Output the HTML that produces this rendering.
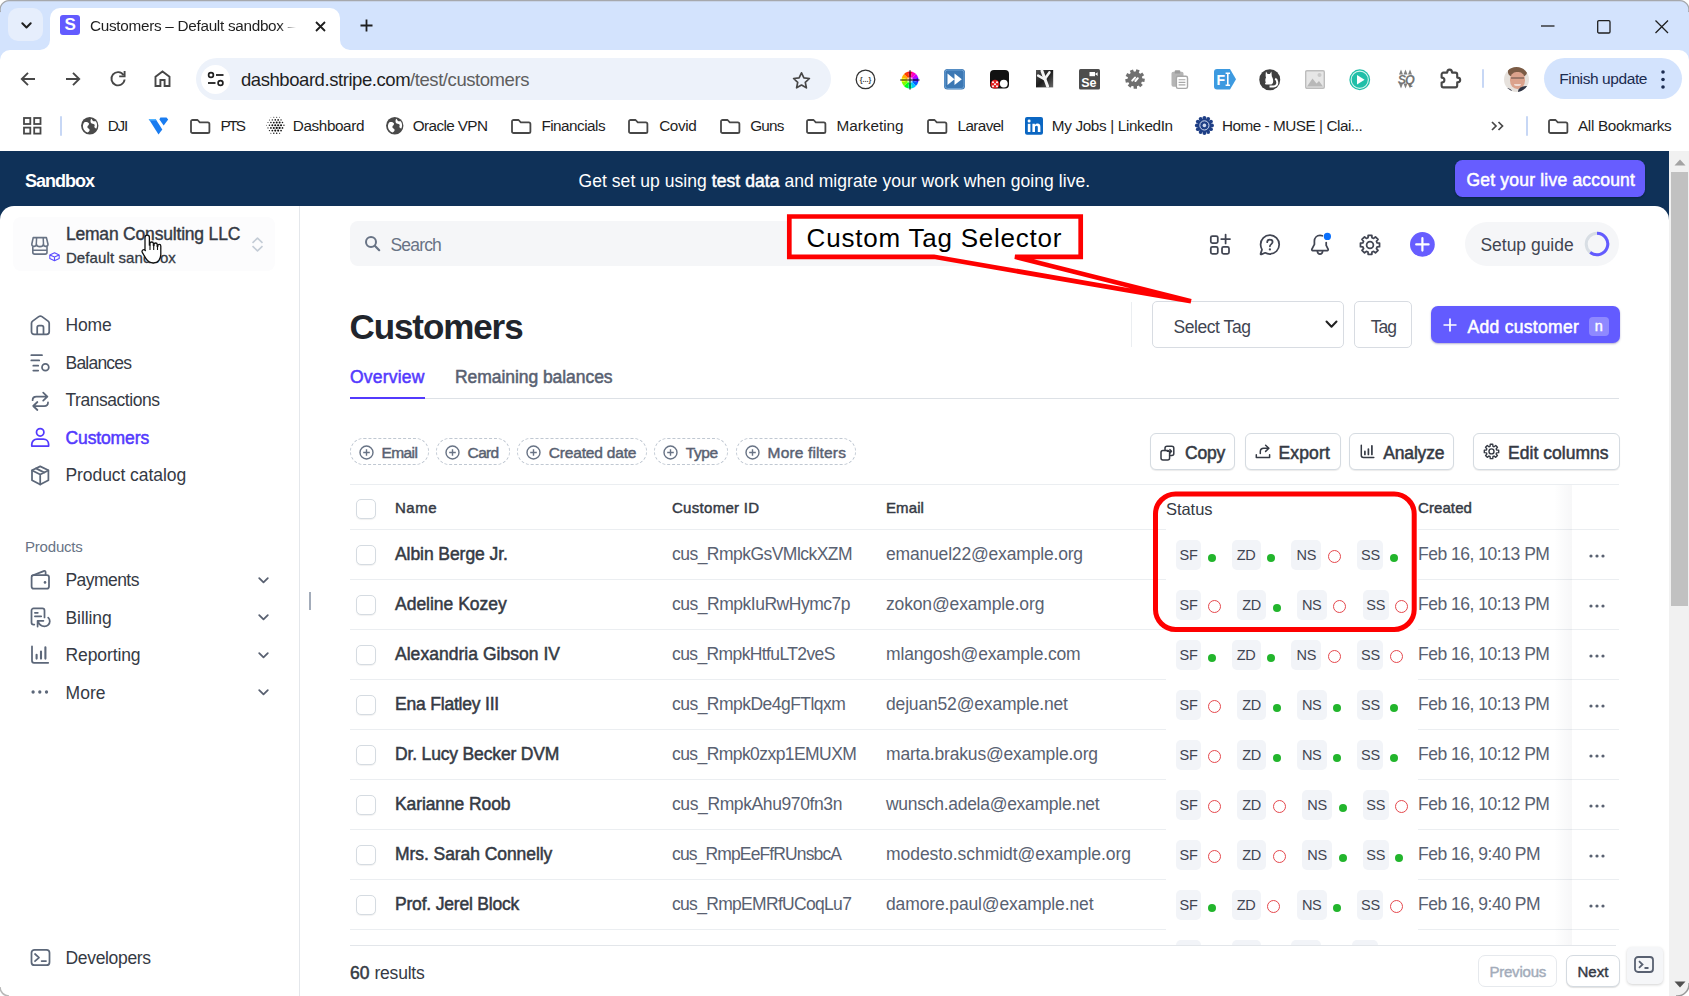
<!DOCTYPE html>
<html><head><meta charset="utf-8">
<style>
*{box-sizing:border-box;margin:0;padding:0}
html,body{width:1689px;height:996px;overflow:hidden;background:#fff}
body{font-family:"Liberation Sans",sans-serif;color:#1f1f1f;position:relative}
.a{position:absolute;white-space:nowrap}
svg{position:absolute;overflow:visible}
/* chrome */
#tabstrip{left:0;top:0;width:1689px;height:104px;background:#d3e3fd}
#toolbar{left:0;top:50px;width:1689px;height:101px;background:#fff;border-radius:10px 10px 0 0}
#tab{left:50px;top:8px;width:290px;height:43px;background:#fff;border-radius:10px 10px 0 0}
#url{left:196px;top:58px;width:635px;height:42px;border-radius:21px;background:#edf2fa}
.ct{font-size:15px;color:#1f1f1f;letter-spacing:-0.35px}
.bm{font-size:15px;color:#1f1f1f;letter-spacing:-0.45px;top:117px}
/* page */
#banner{left:0;top:151px;width:1669px;height:70px;background:#0f3158}
#side{left:0;top:206px;width:300px;height:790px;background:#fff;border-radius:14px 0 0 10px;border-right:1px solid #e4e7eb}
#main{left:300px;top:206px;width:1369px;height:790px;background:#fff;border-radius:0 14px 10px 0}
#sbar{left:1669px;top:151px;width:20px;height:845px;background:#f1f1f1}
.nav{font-size:17.5px;color:#353a44;letter-spacing:-0.3px;left:65px}
.name{font-size:17.5px;-webkit-text-stroke:0.5px #353a44;color:#353a44;left:395px;letter-spacing:-0.55px}
.cid{font-size:17.5px;color:#596171;left:672px;letter-spacing:-0.45px}
.em{font-size:17.5px;color:#596171;left:886px;letter-spacing:-0.3px}
.dt{font-size:17.5px;color:#596171;left:1418px;letter-spacing:-0.35px}
.hd{font-size:15px;-webkit-text-stroke:0.45px #353a44;color:#353a44;top:499.4px;letter-spacing:-0.4px}
.rl{left:350px;width:816px;height:1px;background:#ebeef1}
.rl2{left:1418px;width:201px;height:1px;background:#ebeef1}
.cb{left:356px;width:20px;height:20px;border:1px solid #d5dbe1;border-radius:5px;background:#fff;box-shadow:0 1px 1px rgba(0,0,0,.06)}
.tg{height:29.5px;border-radius:5px;background:#f2f4f8;font-size:14.5px;color:#414552;text-align:center;line-height:31.2px;letter-spacing:-0.3px}
.dg{width:8px;height:8px;border-radius:50%;background:#22b52c}
.dr{width:13px;height:13px;border-radius:50%;border:1.5px solid #e5484d;background:#fff}
.dots{left:1588px;font-size:16px;color:#596171;font-weight:bold;letter-spacing:1px}
.btn{height:37px;border:1px solid #d5dbe1;border-radius:6px;background:#fff;box-shadow:0 1px 1px rgba(0,0,0,.08);font-size:17px;font-weight:bold;color:#353a44;letter-spacing:-0.5px;line-height:36px}
.chip{top:438px;height:27px;border:1px dashed #c0c8d2;border-radius:14px;font-size:15px;font-weight:bold;color:#596171;letter-spacing:-0.45px;line-height:27px}
</style></head><body>
<!-- CHROME -->
<div class="a" id="tabstrip"></div>
<div class="a" id="toolbar"></div>
<div class="a" id="tab"></div>
<div class="a" id="url"></div>
<!-- PAGE -->
<div class="a" id="banner"></div>
<div class="a" id="side"></div>
<div class="a" id="main"></div>
<div class="a" id="sbar"></div>
<!--CHROMEITEMS-->
<div class="a" style="left:8.3px;top:8.3px;width:34.7px;height:33.2px;border-radius:10px;background:#e6eefc"></div>
<svg style="left:20.5px;top:21.5px" width="11" height="7" viewBox="0 0 11 7"><path d="M1.3 1.3L5.5 5.5L9.7 1.3" fill="none" stroke="#1f1f1f" stroke-width="2" stroke-linecap="round" stroke-linejoin="round"/></svg>
<svg style="left:40px;top:40px" width="10" height="10" viewBox="0 0 10 10"><path d="M10 0V10H0A10 10 0 0 0 10 0Z" fill="#fff"/></svg>
<svg style="left:340px;top:40px" width="10" height="10" viewBox="0 0 10 10"><path d="M0 0V10H10A10 10 0 0 1 0 0Z" fill="#fff"/></svg>
<div class="a" style="left:60px;top:15px;width:20px;height:20px;border-radius:3px;background:#635bff"></div>
<div class="a" style="left:64.6px;top:15.2px;font-size:17px;font-weight:bold;color:#fff;letter-spacing:0px;">S</div>
<div class="a" id="c_tab" style="left:90px;top:16.9px;font-size:15.3px;font-weight:normal;color:#1f1f1f;letter-spacing:-0.29px;-webkit-mask-image:linear-gradient(90deg,#000 92%,transparent 100%);">Customers – Default sandbox –</div>
<svg style="left:314.5px;top:20.5px" width="11" height="11" viewBox="0 0 11 11"><path d="M1 1L10 10M10 1L1 10" stroke="#1f1f1f" stroke-width="1.8"/></svg>
<svg style="left:359.5px;top:19px" width="13" height="13" viewBox="0 0 13 13"><path d="M6.5 0.5V12.5M0.5 6.5H12.5" stroke="#1f1f1f" stroke-width="1.8"/></svg>
<svg style="left:1541px;top:25px" width="14" height="2" viewBox="0 0 14 2"><path d="M0 1H13.5" stroke="#1f1f1f" stroke-width="1.3"/></svg>
<svg style="left:1596.5px;top:19.5px" width="14" height="14" viewBox="0 0 14 14"><rect x="0.7" y="0.7" width="12.3" height="12.3" rx="1.2" fill="none" stroke="#1f1f1f" stroke-width="1.3"/></svg>
<svg style="left:1654.5px;top:19.5px" width="14" height="14" viewBox="0 0 14 14"><path d="M0.5 0.5L13 13M13 0.5L0.5 13" stroke="#1f1f1f" stroke-width="1.3"/></svg>
<svg style="left:20px;top:70.5px" width="16" height="16" viewBox="0 0 16 16"><path d="M15 8H2M8 1.8L1.8 8L8 14.2" fill="none" stroke="#474747" stroke-width="1.9"/></svg>
<svg style="left:64.5px;top:70.5px" width="16" height="16" viewBox="0 0 16 16"><path d="M1 8H14M8 1.8L14.2 8L8 14.2" fill="none" stroke="#474747" stroke-width="1.9"/></svg>
<svg style="left:109.5px;top:70px" width="16" height="17" viewBox="0 0 16 17"><path d="M13.6 5.2A6.6 6.6 0 1 0 14.6 9.5" fill="none" stroke="#474747" stroke-width="1.9"/><path d="M14.6 1V6.4H9.2" fill="none" stroke="#474747" stroke-width="1.9"/></svg>
<svg style="left:154px;top:70px" width="17" height="17.5" viewBox="0 0 17 17.5"><path d="M1.5 16V6.8L8.5 1.5L15.5 6.8V16H10.6V10H6.4V16Z" fill="none" stroke="#474747" stroke-width="1.9"/></svg>
<div class="a" style="left:201px;top:64.5px;width:29px;height:29px;border-radius:50%;background:#fff"></div>
<svg style="left:207px;top:71px" width="18" height="16" viewBox="0 0 18 16"><circle cx="4" cy="4" r="2.4" fill="none" stroke="#1f1f1f" stroke-width="1.7"/><path d="M9 4H16.5" stroke="#1f1f1f" stroke-width="1.8"/><circle cx="13.5" cy="12" r="2.4" fill="none" stroke="#1f1f1f" stroke-width="1.7"/><path d="M1 12H8.5" stroke="#1f1f1f" stroke-width="1.8"/></svg>
<div class="a" id="c_url" style="left:241px;top:69.3px;font-size:18.5px;letter-spacing:-0.44px;color:#1f1f1f">dashboard.stripe.com<span style="color:#5e5e5e">/test/customers</span></div>
<svg style="left:792px;top:70.5px" width="19" height="18" viewBox="0 0 19 18"><path d="M9.5 1.8L11.9 6.9L17.4 7.5L13.3 11.3L14.4 16.8L9.5 14L4.6 16.8L5.7 11.3L1.6 7.5L7.1 6.9Z" fill="none" stroke="#474747" stroke-width="1.7" stroke-linejoin="round"/></svg>
<svg style="left:854.5px;top:69px" width="21" height="21" viewBox="0 0 21 21"><circle cx="10.5" cy="10.4" r="9.3" fill="#fff" stroke="#333" stroke-width="1.3"/><text x="10.5" y="13" font-size="7.2" font-family="Liberation Sans" font-weight="bold" text-anchor="middle" fill="#444">{...}</text></svg>
<svg style="left:899.5px;top:69.5px" width="20" height="20" viewBox="0 0 20 20"><path d="M10 10L7.80 1.79A8.5 8.5 0 0 1 12.34 1.83Z" fill="#ff0040"/><path d="M10 10L12.20 1.79A8.5 8.5 0 0 1 16.11 4.10Z" fill="#ff00c0"/><path d="M10 10L16.01 3.99A8.5 8.5 0 0 1 18.25 7.94Z" fill="#c000ff"/><path d="M10 10L18.21 7.80A8.5 8.5 0 0 1 18.17 12.34Z" fill="#4000ff"/><path d="M10 10L18.21 12.20A8.5 8.5 0 0 1 15.90 16.11Z" fill="#0060ff"/><path d="M10 10L16.01 16.01A8.5 8.5 0 0 1 12.06 18.25Z" fill="#00c8ff"/><path d="M10 10L12.20 18.21A8.5 8.5 0 0 1 7.66 18.17Z" fill="#00ffa0"/><path d="M10 10L7.80 18.21A8.5 8.5 0 0 1 3.89 15.90Z" fill="#00ff20"/><path d="M10 10L3.99 16.01A8.5 8.5 0 0 1 1.75 12.06Z" fill="#80ff00"/><path d="M10 10L1.79 12.20A8.5 8.5 0 0 1 1.83 7.66Z" fill="#f0ff00"/><path d="M10 10L1.79 7.80A8.5 8.5 0 0 1 4.10 3.89Z" fill="#ffb000"/><path d="M10 10L3.99 3.99A8.5 8.5 0 0 1 7.94 1.75Z" fill="#ff4000"/><circle cx="10" cy="10" r="3" fill="#fff" opacity=".55"/><path d="M10 0.2V19.6M0.2 10H19.6" stroke="#111" stroke-width="1"/></svg>
<svg style="left:944px;top:69px" width="21" height="20.5" viewBox="0 0 21 20.5"><rect width="21" height="20.5" rx="3.5" fill="#3c78b4"/><rect x="1" y="1" width="19" height="18.5" rx="2.8" fill="none" stroke="#6ea2d4" stroke-width="1"/><path d="M3.5 4.5L10.5 10.2L3.5 16ZM10.5 4.5L17.8 10.2L10.5 16Z" fill="#fff"/></svg>
<svg style="left:990px;top:70px" width="19" height="18.5" viewBox="0 0 19 18.5"><rect width="19" height="18.5" rx="4" fill="#111"/><circle cx="5" cy="14.2" r="4.4" fill="#e02020"/><circle cx="3" cy="12.2" r="1" fill="#fff"/><circle cx="7" cy="12.2" r="1" fill="#fff"/><circle cx="5" cy="14.2" r="1" fill="#fff"/><circle cx="3" cy="16.2" r="1" fill="#fff"/><circle cx="7" cy="16.2" r="1" fill="#fff"/><circle cx="13.8" cy="13.6" r="3.9" fill="#fff"/></svg>
<svg style="left:1036px;top:70.3px" width="17.2" height="17.4" viewBox="0 0 17.2 17.4"><defs><linearGradient id="xg" x1="0" y1="0" x2="1" y2="1"><stop offset="0" stop-color="#555"/><stop offset=".5" stop-color="#1c1c1c"/><stop offset="1" stop-color="#6a6a6a"/></linearGradient></defs><rect width="17.2" height="17.4" fill="url(#xg)"/><path d="M6 1L11.6 16.2" stroke="#f4f4f4" stroke-width="3" stroke-linecap="round"/><path d="M13.4 2.4L8.6 9.2M2.2 5.6L8 8.8" stroke="#f4f4f4" stroke-width="2.6" stroke-linecap="round"/></svg>
<svg style="left:1079px;top:69px" width="21" height="20.5" viewBox="0 0 21 20.5"><rect width="21" height="20.5" rx="1.5" fill="#4d4d4d"/><text x="2.2" y="18" font-size="12.5" font-family="Liberation Sans" font-weight="bold" fill="#fff">Se</text><rect x="10.5" y="3" width="5.5" height="4.2" fill="#fff"/><path d="M16 5.1L18.6 3.2V7Z" fill="#fff"/></svg>
<svg style="left:1124.6px;top:69.2px" width="20" height="20" viewBox="0 0 20 20"><path d="M15.94 10.84L19.61 11.35" stroke="#707070" stroke-width="3.4" stroke-linecap="butt"/><path d="M14.01 14.46L16.49 17.21" stroke="#707070" stroke-width="3.4" stroke-linecap="butt"/><path d="M10.21 16.00L10.34 19.69" stroke="#707070" stroke-width="3.4" stroke-linecap="butt"/><path d="M6.31 14.73L4.03 17.64" stroke="#707070" stroke-width="3.4" stroke-linecap="butt"/><path d="M4.13 11.25L0.51 12.02" stroke="#707070" stroke-width="3.4" stroke-linecap="butt"/><path d="M4.70 7.18L1.44 5.45" stroke="#707070" stroke-width="3.4" stroke-linecap="butt"/><path d="M7.75 4.44L6.37 1.01" stroke="#707070" stroke-width="3.4" stroke-linecap="butt"/><path d="M11.85 4.29L13.00 0.77" stroke="#707070" stroke-width="3.4" stroke-linecap="butt"/><path d="M15.09 6.82L18.23 4.86" stroke="#707070" stroke-width="3.4" stroke-linecap="butt"/><circle cx="10" cy="10" r="7.4" fill="#707070"/><path d="M7.2 11.6L10 8.6M10.4 12L12.8 9.2" stroke="#fff" stroke-width="2" stroke-linecap="round"/></svg>
<svg style="left:1171px;top:69.8px" width="17.2" height="19" viewBox="0 0 18.5 20.5"><rect x="0.5" y="2" width="13" height="16" rx="2" fill="#b5b5b5"/><rect x="4" y="0.3" width="6" height="3.6" rx="1" fill="#9c9c9c"/><rect x="5.8" y="6.8" width="12" height="13" rx="1.8" fill="#fff" stroke="#a8a8a8" stroke-width="1.5"/><path d="M8.2 10.5H15.5M8.2 13.3H15.5M8.2 16.1H15.5" stroke="#a8a8a8" stroke-width="1.3"/></svg>
<svg style="left:1214px;top:69px" width="22" height="20.5" viewBox="0 0 22 20.5"><path d="M3 0H16L22 10.25L16 20.5H3A3 3 0 0 1 0 17.5V3A3 3 0 0 1 3 0Z" fill="#3d9ae0"/><text x="2.5" y="15.6" font-size="14" font-family="Liberation Sans" font-weight="bold" fill="#fff">F</text><path d="M13.8 4.2V16.3M11.6 4.2H16M11.6 16.3H16" stroke="#fff" stroke-width="1.6"/></svg>
<svg style="left:1259px;top:68.8px" width="21.5" height="21.5" viewBox="0 0 21.5 21.5"><circle cx="10.75" cy="10.75" r="10.5" fill="#404040"/><path d="M7 2.6L8.6 5L10.8 5L12.4 2.6L12.8 7.2C13.6 9 14.2 10 14.2 12.2C14.2 14.4 13 15.6 11 15.6H7.2C6 15.6 5.6 14 6.8 13.4C6 12 6.2 10 7 8.6C6.4 7.4 6.6 4.6 7 2.6Z" fill="#fff"/><path d="M10.5 17.6H14.4C17.2 17.6 18.6 15.4 18.2 12.8C18 11.4 17.2 10.2 16.2 9.6" fill="none" stroke="#fff" stroke-width="2"/></svg>
<svg style="left:1304.5px;top:70px" width="20" height="19" viewBox="0 0 20 19"><rect x="0.7" y="0.7" width="18.6" height="17.6" rx="1.2" fill="#e6e6e6" stroke="#bdbdbd" stroke-width="1.4"/><path d="M2 16.5L7.5 8.5L11.5 13.5L14 11L18 16.5Z" fill="#b8b8b8"/><circle cx="14.5" cy="5" r="2" fill="#c9c9c9"/></svg>
<svg style="left:1349px;top:69px" width="21.5" height="21.5" viewBox="0 0 21.5 21.5"><circle cx="10.75" cy="10.75" r="10.4" fill="#1fbfa8"/><circle cx="10.75" cy="10.75" r="8.6" fill="none" stroke="#d6f5ef" stroke-width="1.1"/><path d="M8 6L15.6 10.75L8 15.5Z" fill="#fff"/></svg>
<svg style="left:1395.5px;top:69px" width="19" height="20" viewBox="0 0 19 20"><path d="M3 5.4L5 0.6L7 5.4Z" fill="#808080"/><path d="M7.5 5.4L9.5 0.6L11.5 5.4Z" fill="#808080"/><path d="M12 5.4L14 0.6L16 5.4Z" fill="#808080"/><path d="M3 14.6L5 19.4L7 14.6Z" fill="#808080"/><path d="M7.5 14.6L9.5 19.4L11.5 14.6Z" fill="#808080"/><path d="M12 14.6L14 19.4L16 14.6Z" fill="#808080"/><text x="9.8" y="14.6" font-size="12.5" font-style="italic" font-family="Liberation Sans" font-weight="bold" text-anchor="middle" fill="#757575" letter-spacing="-0.9">SQ</text></svg>
<svg style="left:1440px;top:67.8px" width="22" height="21.5" viewBox="0 0 22 21.5"><path d="M3.4 4.6H7.2C7.2 2.6 8.2 1.6 9.6 1.6C11 1.6 12 2.6 12 4.6H15.4C16.4 4.6 17.2 5.4 17.2 6.4V9.6C19.2 9.6 20.2 10.6 20.2 12C20.2 13.4 19.2 14.4 17.2 14.4V17.6C17.2 18.6 16.4 19.4 15.4 19.4H3.4C2.4 19.4 1.6 18.6 1.6 17.6V14.6C3.4 14.6 4.4 13.5 4.4 12.1C4.4 10.7 3.4 9.6 1.6 9.6V6.4C1.6 5.4 2.4 4.6 3.4 4.6Z" fill="none" stroke="#474747" stroke-width="2.1" stroke-linejoin="round"/></svg>
<div class="a" style="left:1481.5px;top:69.3px;width:2px;height:19px;background:#c7d7f5;border-radius:1px"></div>
<div class="a" style="left:1504px;top:66.5px;width:25px;height:25px;border-radius:50%;overflow:hidden;background:#e6e1dc"><div class="a" style="left:4px;top:-3px;width:19px;height:13px;border-radius:50% 50% 35% 35%;background:#7b5b45"></div><div class="a" style="left:6px;top:5.5px;width:14.5px;height:17px;border-radius:45% 45% 50% 50%;background:#dba28c"></div><div class="a" style="left:7px;top:10.5px;width:12.5px;height:1.6px;background:#5e4a42;opacity:.5"></div><div class="a" style="left:9.5px;top:17px;width:7.5px;height:2px;border-radius:0 0 4px 4px;background:#f5e9e4;opacity:.8"></div><div class="a" style="left:14px;top:19px;width:14px;height:9px;border-radius:60% 0 0 0;background:#2f3444"></div><div class="a" style="left:-2px;top:21px;width:10px;height:6px;border-radius:0 60% 0 0;background:#3a3f4e"></div></div>
<div class="a" style="left:1544px;top:58px;width:137.6px;height:41.2px;border-radius:21px;background:#d3e3fd"></div>
<div class="a" id="c_fin" style="left:1559.3px;top:69.8px;font-size:15.5px;font-weight:normal;color:#1b2b50;letter-spacing:-0.41px;">Finish update</div>
<svg style="left:1660.6px;top:69.5px" width="4" height="19" viewBox="0 0 4 19"><circle cx="2" cy="2" r="1.8" fill="#1b2b50"/><circle cx="2" cy="9.5" r="1.8" fill="#1b2b50"/><circle cx="2" cy="17" r="1.8" fill="#1b2b50"/></svg>
<svg style="left:23px;top:117px" width="19" height="18" viewBox="0 0 19 18"><rect x="1" y="1" width="6.3" height="6" fill="none" stroke="#474747" stroke-width="1.8"/><rect x="11.2" y="1" width="6.3" height="6" fill="none" stroke="#474747" stroke-width="1.8"/><rect x="1" y="10.6" width="6.3" height="6" fill="none" stroke="#474747" stroke-width="1.8"/><rect x="11.2" y="10.6" width="6.3" height="6" fill="none" stroke="#474747" stroke-width="1.8"/></svg>
<div class="a" style="left:59.8px;top:115.5px;width:2px;height:20px;background:#c7d7f5;border-radius:1px"></div>
<svg style="left:81px;top:116.7px" width="17.5" height="17.5" viewBox="0 0 17.5 17.5"><circle cx="8.75" cy="8.75" r="8.7" fill="#4a4a4a"/><path d="M3.4 5.2C5.2 4.6 7.6 5 8 6.6C8.4 8.4 6.2 8.6 6.4 10.2C6.6 11.6 8.4 11.2 8.6 12.8C8.7 14 7.6 15.2 6.6 15.6C3.6 14.4 1.6 11.4 2 8.2C2.2 7 2.7 6 3.4 5.2ZM10.2 1.8C11.4 2.4 11.2 3.8 12.4 4.2C13.6 4.6 14.4 3.8 15 4.6C16.4 6.6 16.4 9.4 15.4 11.4C14.6 11.6 13.6 11 13.4 10C13.2 8.8 14.2 8.2 13.4 7.4C12.4 6.4 10.8 7.2 10 6C9.2 4.8 9.4 2.8 10.2 1.8Z" fill="#fff"/></svg>
<div class="a" style="left:107.8px;top:117px;font-size:15.3px;font-weight:normal;color:#1f1f1f;letter-spacing:-1.25px;">DJI</div>
<svg style="left:148px;top:117px" width="21" height="18" viewBox="0 0 21 18"><path d="M0.7 2H7.6L14.3 12.4L10.5 17.6Z" fill="#1a7cf0"/><path d="M0.7 2H7.6L8.5 3.5H1.7Z" fill="#55b4ff"/><path d="M12.4 0.6H18.5L20.2 2.5L15.7 8.6L11.4 2.5Z" fill="#1a7cf0"/></svg>
<svg style="left:190px;top:118.8px" width="20.5" height="15" viewBox="0 0 20.5 15"><path d="M1 2.6A1.6 1.6 0 0 1 2.6 1H7.6L9.8 3.3H17.8A1.6 1.6 0 0 1 19.4 4.9V12.4A1.6 1.6 0 0 1 17.8 14H2.6A1.6 1.6 0 0 1 1 12.4Z" fill="none" stroke="#474747" stroke-width="1.8" stroke-linejoin="round"/></svg>
<div class="a" style="left:220.5px;top:117px;font-size:15.3px;font-weight:normal;color:#1f1f1f;letter-spacing:-2.18px;">PTS</div>
<svg style="left:265.2px;top:115.4px" width="20.5" height="20.5" viewBox="0 0 20.5 20.5"><circle cx="5.90" cy="2.25" r="0.34" fill="#111"/><circle cx="8.80" cy="2.25" r="0.50" fill="#111"/><circle cx="11.70" cy="2.25" r="0.55" fill="#111"/><circle cx="14.60" cy="2.25" r="0.45" fill="#111"/><circle cx="4.45" cy="4.91" r="0.50" fill="#111"/><circle cx="7.35" cy="4.91" r="0.71" fill="#111"/><circle cx="10.25" cy="4.91" r="0.82" fill="#111"/><circle cx="13.15" cy="4.91" r="0.84" fill="#111"/><circle cx="16.05" cy="4.91" r="0.70" fill="#111"/><circle cx="3.00" cy="7.58" r="0.53" fill="#111"/><circle cx="5.90" cy="7.58" r="0.78" fill="#111"/><circle cx="8.80" cy="7.58" r="0.93" fill="#111"/><circle cx="11.70" cy="7.58" r="1.00" fill="#111"/><circle cx="14.60" cy="7.58" r="1.00" fill="#111"/><circle cx="17.50" cy="7.58" r="0.79" fill="#111"/><circle cx="1.55" cy="10.25" r="0.42" fill="#111"/><circle cx="4.45" cy="10.25" r="0.76" fill="#111"/><circle cx="7.35" cy="10.25" r="0.95" fill="#111"/><circle cx="10.25" cy="10.25" r="1.04" fill="#111"/><circle cx="13.15" cy="10.25" r="1.10" fill="#111"/><circle cx="16.05" cy="10.25" r="1.03" fill="#111"/><circle cx="18.95" cy="10.25" r="0.67" fill="#111"/><circle cx="3.00" cy="12.92" r="0.61" fill="#111"/><circle cx="5.90" cy="12.92" r="0.89" fill="#111"/><circle cx="8.80" cy="12.92" r="1.04" fill="#111"/><circle cx="11.70" cy="12.92" r="1.12" fill="#111"/><circle cx="14.60" cy="12.92" r="1.11" fill="#111"/><circle cx="17.50" cy="12.92" r="0.87" fill="#111"/><circle cx="4.45" cy="15.59" r="0.65" fill="#111"/><circle cx="7.35" cy="15.59" r="0.91" fill="#111"/><circle cx="10.25" cy="15.59" r="1.04" fill="#111"/><circle cx="13.15" cy="15.59" r="1.04" fill="#111"/><circle cx="16.05" cy="15.59" r="0.86" fill="#111"/><circle cx="5.90" cy="18.25" r="0.50" fill="#111"/><circle cx="8.80" cy="18.25" r="0.73" fill="#111"/><circle cx="11.70" cy="18.25" r="0.77" fill="#111"/><circle cx="14.60" cy="18.25" r="0.61" fill="#111"/></svg>
<div class="a" style="left:292.8px;top:117px;font-size:15.3px;font-weight:normal;color:#1f1f1f;letter-spacing:-0.4px;">Dashboard</div>
<svg style="left:385.8px;top:116.7px" width="17.5" height="17.5" viewBox="0 0 17.5 17.5"><circle cx="8.75" cy="8.75" r="8.7" fill="#4a4a4a"/><path d="M3.4 5.2C5.2 4.6 7.6 5 8 6.6C8.4 8.4 6.2 8.6 6.4 10.2C6.6 11.6 8.4 11.2 8.6 12.8C8.7 14 7.6 15.2 6.6 15.6C3.6 14.4 1.6 11.4 2 8.2C2.2 7 2.7 6 3.4 5.2ZM10.2 1.8C11.4 2.4 11.2 3.8 12.4 4.2C13.6 4.6 14.4 3.8 15 4.6C16.4 6.6 16.4 9.4 15.4 11.4C14.6 11.6 13.6 11 13.4 10C13.2 8.8 14.2 8.2 13.4 7.4C12.4 6.4 10.8 7.2 10 6C9.2 4.8 9.4 2.8 10.2 1.8Z" fill="#fff"/></svg>
<div class="a" style="left:412.8px;top:117px;font-size:15.3px;font-weight:normal;color:#1f1f1f;letter-spacing:-0.62px;">Oracle VPN</div>
<svg style="left:511.3px;top:118.8px" width="20.5" height="15" viewBox="0 0 20.5 15"><path d="M1 2.6A1.6 1.6 0 0 1 2.6 1H7.6L9.8 3.3H17.8A1.6 1.6 0 0 1 19.4 4.9V12.4A1.6 1.6 0 0 1 17.8 14H2.6A1.6 1.6 0 0 1 1 12.4Z" fill="none" stroke="#474747" stroke-width="1.8" stroke-linejoin="round"/></svg>
<div class="a" style="left:541.4px;top:117px;font-size:15.3px;font-weight:normal;color:#1f1f1f;letter-spacing:-0.52px;">Financials</div>
<svg style="left:628.2px;top:118.8px" width="20.5" height="15" viewBox="0 0 20.5 15"><path d="M1 2.6A1.6 1.6 0 0 1 2.6 1H7.6L9.8 3.3H17.8A1.6 1.6 0 0 1 19.4 4.9V12.4A1.6 1.6 0 0 1 17.8 14H2.6A1.6 1.6 0 0 1 1 12.4Z" fill="none" stroke="#474747" stroke-width="1.8" stroke-linejoin="round"/></svg>
<div class="a" style="left:659.2px;top:117px;font-size:15.3px;font-weight:normal;color:#1f1f1f;letter-spacing:-0.4px;">Covid</div>
<svg style="left:720px;top:118.8px" width="20.5" height="15" viewBox="0 0 20.5 15"><path d="M1 2.6A1.6 1.6 0 0 1 2.6 1H7.6L9.8 3.3H17.8A1.6 1.6 0 0 1 19.4 4.9V12.4A1.6 1.6 0 0 1 17.8 14H2.6A1.6 1.6 0 0 1 1 12.4Z" fill="none" stroke="#474747" stroke-width="1.8" stroke-linejoin="round"/></svg>
<div class="a" style="left:750.3px;top:117px;font-size:15.3px;font-weight:normal;color:#1f1f1f;letter-spacing:-0.84px;">Guns</div>
<svg style="left:805.8px;top:118.8px" width="20.5" height="15" viewBox="0 0 20.5 15"><path d="M1 2.6A1.6 1.6 0 0 1 2.6 1H7.6L9.8 3.3H17.8A1.6 1.6 0 0 1 19.4 4.9V12.4A1.6 1.6 0 0 1 17.8 14H2.6A1.6 1.6 0 0 1 1 12.4Z" fill="none" stroke="#474747" stroke-width="1.8" stroke-linejoin="round"/></svg>
<div class="a" style="left:836.5px;top:117px;font-size:15.3px;font-weight:normal;color:#1f1f1f;letter-spacing:-0.02px;">Marketing</div>
<svg style="left:926.6px;top:118.8px" width="20.5" height="15" viewBox="0 0 20.5 15"><path d="M1 2.6A1.6 1.6 0 0 1 2.6 1H7.6L9.8 3.3H17.8A1.6 1.6 0 0 1 19.4 4.9V12.4A1.6 1.6 0 0 1 17.8 14H2.6A1.6 1.6 0 0 1 1 12.4Z" fill="none" stroke="#474747" stroke-width="1.8" stroke-linejoin="round"/></svg>
<div class="a" style="left:957.6px;top:117px;font-size:15.3px;font-weight:normal;color:#1f1f1f;letter-spacing:-0.64px;">Laravel</div>
<svg style="left:1025px;top:117.3px" width="18" height="17.7" viewBox="0 0 18 17.7"><rect width="18" height="17.7" rx="2" fill="#0a66c2"/><rect x="2.8" y="6.8" width="2.6" height="8.2" fill="#fff"/><circle cx="4.1" cy="4.1" r="1.5" fill="#fff"/><path d="M7.4 6.8H9.9V8A3 3 0 0 1 12.5 6.6C14.8 6.6 15.4 8.1 15.4 10V15H12.8V10.6C12.8 9.6 12.6 8.8 11.5 8.8C10.4 8.8 10 9.6 10 10.6V15H7.4Z" fill="#fff"/></svg>
<div class="a" style="left:1051.8px;top:117px;font-size:15.3px;font-weight:normal;color:#1f1f1f;letter-spacing:-0.35px;">My Jobs | LinkedIn</div>
<svg style="left:1195px;top:116.3px" width="18.8" height="18.8" viewBox="0 0 18.8 18.8"><circle cx="17.00" cy="9.40" r="1.9" fill="#1f3f86"/><circle cx="15.98" cy="13.20" r="1.9" fill="#1f3f86"/><circle cx="13.20" cy="15.98" r="1.9" fill="#1f3f86"/><circle cx="9.40" cy="17.00" r="1.9" fill="#1f3f86"/><circle cx="5.60" cy="15.98" r="1.9" fill="#1f3f86"/><circle cx="2.82" cy="13.20" r="1.9" fill="#1f3f86"/><circle cx="1.80" cy="9.40" r="1.9" fill="#1f3f86"/><circle cx="2.82" cy="5.60" r="1.9" fill="#1f3f86"/><circle cx="5.60" cy="2.82" r="1.9" fill="#1f3f86"/><circle cx="9.40" cy="1.80" r="1.9" fill="#1f3f86"/><circle cx="13.20" cy="2.82" r="1.9" fill="#1f3f86"/><circle cx="15.98" cy="5.60" r="1.9" fill="#1f3f86"/><circle cx="9.4" cy="9.4" r="7" fill="#1f3f86"/><circle cx="9.4" cy="9.4" r="4.6" fill="none" stroke="#cfd8ee" stroke-width="1"/><circle cx="9.4" cy="9.4" r="1.8" fill="#cfd8ee"/></svg>
<div class="a" style="left:1221.9px;top:117px;font-size:15.3px;font-weight:normal;color:#1f1f1f;letter-spacing:-0.47px;">Home - MUSE | Clai...</div>
<svg style="left:1491px;top:120.5px" width="13" height="10" viewBox="0 0 13 10"><path d="M1 1L5 5L1 9M7.5 1L11.5 5L7.5 9" fill="none" stroke="#474747" stroke-width="1.7"/></svg>
<div class="a" style="left:1525.5px;top:115.5px;width:2px;height:20px;background:#c7d7f5;border-radius:1px"></div>
<svg style="left:1547.6px;top:118.8px" width="20.5" height="15" viewBox="0 0 20.5 15"><path d="M1 2.6A1.6 1.6 0 0 1 2.6 1H7.6L9.8 3.3H17.8A1.6 1.6 0 0 1 19.4 4.9V12.4A1.6 1.6 0 0 1 17.8 14H2.6A1.6 1.6 0 0 1 1 12.4Z" fill="none" stroke="#474747" stroke-width="1.8" stroke-linejoin="round"/></svg>
<div class="a" style="left:1578px;top:117px;font-size:15.3px;font-weight:normal;color:#1f1f1f;letter-spacing:-0.34px;">All Bookmarks</div>
<!--/CHROMEITEMS-->
<!--BANNERITEMS-->
<!--SIDEITEMS-->
<div class="a" id="b_sand" style="left:25px;top:170.5px;font-size:18px;font-weight:bold;color:#fff;letter-spacing:-1.0px;">Sandbox</div>
<div class="a" id="b_mid" style="left:578.5px;top:170.8px;font-size:17.5px;color:#fff;letter-spacing:0.06px">Get set up using <span style="-webkit-text-stroke:0.5px #fff">test data</span> and migrate your work when going live.</div>
<div class="a" style="left:1455px;top:160px;width:190px;height:37px;border-radius:7.5px;background:#675dff;box-shadow:0 1px 2px rgba(0,0,20,.3)"></div>
<div class="a" id="b_btn" style="left:1466.5px;top:170.4px;font-size:17.5px;font-weight:normal;color:#fff;letter-spacing:0.2px;-webkit-text-stroke:0.51px #fff;">Get your live account</div>
<div class="a" style="left:13px;top:217px;width:262px;height:54px;border-radius:8px;background:#fcfcfd"></div>
<svg style="left:30px;top:236px" width="20" height="20" viewBox="0 0 20 20"><path d="M3.2 1.6H16.4L18 8.2C18 9.6 17 10.4 15.8 10.4C14.5 10.4 13.6 9.6 13.4 8.4C13.2 9.6 12.2 10.6 9.9 10.6C7.6 10.6 6.6 9.6 6.4 8.4C6.2 9.6 5.3 10.4 4 10.4C2.8 10.4 1.8 9.6 1.8 8.2Z" fill="none" stroke="#687385" stroke-width="1.6" stroke-linejoin="round"/><path d="M6.6 1.8L6.3 8.2M13.2 1.8L13.5 8.2" stroke="#687385" stroke-width="1.5"/><path d="M2.8 10.4V16.2C2.8 17.3 3.6 18.1 4.7 18.1H15.1C16.2 18.1 17 17.3 17 16.2V10.4M2.8 14.2H17" fill="none" stroke="#687385" stroke-width="1.6" stroke-linejoin="round"/></svg>
<svg style="left:48.6px;top:252.4px" width="11" height="9.5" viewBox="0 0 11 9.5"><path d="M5.5 0.8L10.2 2.9V6.4L5.5 8.7L0.8 6.4V2.9Z M0.9 3L5.5 5.1L10.1 3M5.5 5.1V8.6" fill="none" stroke="#5b4bff" stroke-width="1.1" stroke-linejoin="round"/></svg>
<div class="a" id="s_acc" style="left:65.9px;top:223.5px;font-size:17.5px;font-weight:normal;color:#353a44;letter-spacing:-0.19px;-webkit-text-stroke:0.4px #353a44;">Leman Consulting LLC</div>
<div class="a" id="s_def" style="left:65.9px;top:248.6px;font-size:15px;font-weight:normal;color:#353a44;letter-spacing:0.11px;-webkit-text-stroke:0.3px #353a44;">Default sandbox</div>
<svg style="left:251px;top:236.5px" width="13" height="15" viewBox="0 0 13 15"><path d="M1.5 5.8L6.5 1.2L11.5 5.8M1.5 9.2L6.5 13.8L11.5 9.2" fill="none" stroke="#c4ccd6" stroke-width="1.6" stroke-linejoin="round"/></svg>
<div class="a" style="left:65.5px;top:315.3px;font-size:17.5px;font-weight:normal;color:#353a44;letter-spacing:-0.17px;">Home</div>
<div class="a" style="left:65.5px;top:352.8px;font-size:17.5px;font-weight:normal;color:#353a44;letter-spacing:-0.78px;">Balances</div>
<div class="a" style="left:65.5px;top:390.3px;font-size:17.5px;font-weight:normal;color:#353a44;letter-spacing:-0.46px;">Transactions</div>
<div class="a" style="left:65.5px;top:427.8px;font-size:17.5px;font-weight:normal;color:#533afd;letter-spacing:-0.12px;-webkit-text-stroke:0.51px #533afd;">Customers</div>
<div class="a" style="left:65.5px;top:465.3px;font-size:17.5px;font-weight:normal;color:#353a44;letter-spacing:-0.07px;">Product catalog</div>
<div class="a" style="left:65.5px;top:570.3px;font-size:17.5px;font-weight:normal;color:#353a44;letter-spacing:-0.56px;">Payments</div>
<div class="a" style="left:65.5px;top:607.8px;font-size:17.5px;font-weight:normal;color:#353a44;letter-spacing:-0.07px;">Billing</div>
<div class="a" style="left:65.5px;top:645.3px;font-size:17.5px;font-weight:normal;color:#353a44;letter-spacing:-0.1px;">Reporting</div>
<div class="a" style="left:65.5px;top:682.8px;font-size:17.5px;font-weight:normal;color:#353a44;letter-spacing:0.06px;">More</div>
<div class="a" style="left:65.5px;top:948.1999999999999px;font-size:17.5px;font-weight:normal;color:#353a44;letter-spacing:-0.33px;">Developers</div>
<svg style="left:257.5px;top:576.5px" width="11" height="7" viewBox="0 0 11 7"><path d="M1.2 1.2L5.5 5.4L9.8 1.2" fill="none" stroke="#596171" stroke-width="1.8" stroke-linejoin="round" stroke-linecap="round"/></svg>
<svg style="left:257.5px;top:614.0px" width="11" height="7" viewBox="0 0 11 7"><path d="M1.2 1.2L5.5 5.4L9.8 1.2" fill="none" stroke="#596171" stroke-width="1.8" stroke-linejoin="round" stroke-linecap="round"/></svg>
<svg style="left:257.5px;top:651.5px" width="11" height="7" viewBox="0 0 11 7"><path d="M1.2 1.2L5.5 5.4L9.8 1.2" fill="none" stroke="#596171" stroke-width="1.8" stroke-linejoin="round" stroke-linecap="round"/></svg>
<svg style="left:257.5px;top:689.0px" width="11" height="7" viewBox="0 0 11 7"><path d="M1.2 1.2L5.5 5.4L9.8 1.2" fill="none" stroke="#596171" stroke-width="1.8" stroke-linejoin="round" stroke-linecap="round"/></svg>
<div class="a" id="s_prod" style="left:25px;top:538px;font-size:15px;font-weight:normal;color:#687385;letter-spacing:-0.2px;">Products</div>
<div class="a" style="left:309.3px;top:592px;width:1.7px;height:18px;background:#a3acba"></div>
<!--NAVICONS-->
<svg style="left:30px;top:314.5px" width="21" height="21" viewBox="0 0 21 21"><path d="M1.5 8.3C1.5 7.4 1.9 6.6 2.6 6.1L8.7 1.6C9.7 0.9 11 0.9 12 1.6L18.1 6.1C18.8 6.6 19.2 7.4 19.2 8.3V16.8C19.2 18.3 18 19.4 16.6 19.4H4.1C2.7 19.4 1.5 18.3 1.5 16.8Z" stroke="#5c6779" stroke-width="1.75" fill="none" stroke-linejoin="round" stroke-linecap="round"/><path d="M7.2 19.2V12.4C7.2 11.4 8 10.6 9 10.6H11.7C12.7 10.6 13.5 11.4 13.5 12.4V19.2" stroke="#5c6779" stroke-width="1.75" fill="none" stroke-linejoin="round" stroke-linecap="round"/></svg>
<svg style="left:30px;top:352.5px" width="21" height="20" viewBox="0 0 21 20"><path d="M1.3 2.2H12M1.3 7.4H9.2M3.3 12.7H8.2M3.3 17.5H8.2" stroke="#5c6779" stroke-width="1.75" fill="none" stroke-linejoin="round" stroke-linecap="round"/><circle cx="15.4" cy="14.2" r="3.4" stroke="#5c6779" stroke-width="1.75" fill="none" stroke-linejoin="round" stroke-linecap="round"/></svg>
<svg style="left:30px;top:390.5px" width="21" height="21" viewBox="0 0 21 21"><path d="M13.2 1.6L17.4 5.6L13.2 9.6M17 5.6H6.4C4.2 5.6 2.6 7.2 2.6 9.2" stroke="#5c6779" stroke-width="1.75" fill="none" stroke-linejoin="round" stroke-linecap="round"/><path d="M7.4 11L3.2 15L7.4 19M3.6 15H14.2C16.4 15 18 13.4 18 11.4" stroke="#5c6779" stroke-width="1.75" fill="none" stroke-linejoin="round" stroke-linecap="round"/></svg>
<svg style="left:30px;top:427px" width="21" height="21" viewBox="0 0 21 21"><circle cx="10.2" cy="5.3" r="3.7" stroke="#533afd" stroke-width="1.75" fill="none" stroke-linejoin="round" stroke-linecap="round"/><path d="M1.8 19V17.2C1.8 14.3 4.1 12 7 12H13.4C16.3 12 18.6 14.3 18.6 17.2V19Z" stroke="#533afd" stroke-width="1.75" fill="none" stroke-linejoin="round" stroke-linecap="round"/></svg>
<svg style="left:30px;top:464.5px" width="21" height="21" viewBox="0 0 21 21"><path d="M10.2 1.4L18.4 5.2V15.2L10.2 19.6L2 15.2V5.2Z" stroke="#5c6779" stroke-width="1.75" fill="none" stroke-linejoin="round" stroke-linecap="round"/><path d="M2.2 5.4L10.2 9.6L18.2 5.4M10.2 9.6V19.4M6 3.4L14.4 7.6" stroke="#5c6779" stroke-width="1.75" fill="none" stroke-linejoin="round" stroke-linecap="round"/></svg>
<svg style="left:29.5px;top:569px" width="21" height="21" viewBox="0 0 21 21"><path d="M1.6 8.2C1.6 7 2.6 6 3.8 6H16.8C18 6 19 7 19 8.2V17.4C19 18.6 18 19.6 16.8 19.6H3.8C2.6 19.6 1.6 18.6 1.6 17.4Z" stroke="#5c6779" stroke-width="1.75" fill="none" stroke-linejoin="round" stroke-linecap="round"/><path d="M1.8 6.8L13.6 2C14.6 1.6 15.6 2.2 15.6 3.2V5.8M4.4 5.8L13.2 2.4" stroke="#5c6779" stroke-width="1.75" fill="none" stroke-linejoin="round" stroke-linecap="round"/><circle cx="15" cy="13.4" r="1.3" fill="#5c6779"/></svg>
<svg style="left:29.5px;top:606.5px" width="21" height="21" viewBox="0 0 21 21"><path d="M4.3 17.6H3.6C2.4 17.6 1.5 16.7 1.5 15.5V3.5C1.5 2.3 2.4 1.4 3.6 1.4H12.4C13.6 1.4 14.5 2.3 14.5 3.5V10.4" stroke="#5c6779" stroke-width="1.75" fill="none" stroke-linejoin="round" stroke-linecap="round"/><path d="M4.9 5.8H7.8M4.9 9.3H11.2" stroke="#5c6779" stroke-width="1.75" fill="none" stroke-linejoin="round" stroke-linecap="round"/><path d="M7.6 19.6V13.8H13.4M8 14.2C9 17.3 11.4 19.3 14.4 19.3C17.4 19.3 19.8 17 19.8 14.2C19.8 12.8 19.2 11.6 18.2 10.7" stroke="#5c6779" stroke-width="1.75" fill="none" stroke-linejoin="round" stroke-linecap="round"/></svg>
<svg style="left:30px;top:645px" width="21" height="20" viewBox="0 0 21 20"><path d="M2 1.4V15.8C2 16.9 2.9 17.8 4 17.8H18.2" stroke="#5c6779" stroke-width="1.75" fill="none" stroke-linejoin="round" stroke-linecap="round"/><path d="M6.6 9.8V13.6M11 6.6V13.6M15.4 2.2V13.6" stroke="#5c6779" stroke-width="2.1" fill="none" stroke-linecap="round"/></svg>
<svg style="left:30px;top:689px" width="21" height="6" viewBox="0 0 21 6"><circle cx="3.1" cy="3" r="1.65" fill="#5c6779"/><circle cx="9.8" cy="3" r="1.65" fill="#5c6779"/><circle cx="16.5" cy="3" r="1.65" fill="#5c6779"/></svg>
<svg style="left:29.5px;top:947.5px" width="21" height="19" viewBox="0 0 21 19"><rect x="1.5" y="1.8" width="18" height="15.4" rx="3" stroke="#5c6779" stroke-width="1.75" fill="none" stroke-linejoin="round" stroke-linecap="round"/><path d="M5 6L9 9.6L5 13.2M11.6 13H16" stroke="#5c6779" stroke-width="1.75" fill="none" stroke-linejoin="round" stroke-linecap="round"/></svg>
<!--/NAVICONS-->
<!--/SIDEITEMS-->
<!--MAINITEMS-->
<div class="a" style="left:350px;top:221px;width:700px;height:45px;border-radius:8px;background:#f5f6f8"></div>
<svg style="left:364px;top:235px" width="17" height="17" viewBox="0 0 17 17"><circle cx="7" cy="7" r="5" fill="none" stroke="#687385" stroke-width="2"/><path d="M10.8 10.8L15.2 15.2" stroke="#687385" stroke-width="2.2" stroke-linecap="round"/></svg>
<div class="a" id="t_search" style="left:390.5px;top:235.4px;font-size:17.5px;font-weight:normal;color:#687385;letter-spacing:-0.83px;">Search</div>
<div class="a" id="t_title" style="left:349.5px;top:307.3px;font-size:35px;font-weight:bold;color:#21252c;letter-spacing:-1.09px;">Customers</div>
<div class="a" id="t_ov" style="left:350px;top:367.4px;font-size:17.5px;font-weight:normal;color:#533afd;letter-spacing:0.2px;-webkit-text-stroke:0.51px #533afd;">Overview</div>
<div class="a" id="t_rb" style="left:455px;top:367.4px;font-size:17.5px;font-weight:normal;color:#596171;letter-spacing:-0.06px;-webkit-text-stroke:0.51px #596171;">Remaining balances</div>
<div class="a" style="left:350px;top:398px;width:1269px;height:1px;background:#dde1e6"></div>
<div class="a" style="left:350px;top:396.5px;width:75px;height:2.5px;background:#533afd"></div>
<div class="a chip" style="left:350px;width:78.5px"></div>
<svg style="left:358.5px;top:444.5px" width="15" height="15" viewBox="0 0 15 15"><circle cx="7.5" cy="7.5" r="6.5" fill="none" stroke="#687385" stroke-width="1.4"/><path d="M7.5 4.2V10.8M4.2 7.5H10.8" stroke="#687385" stroke-width="1.4"/></svg>
<div class="a" style="left:381.4px;top:443.5px;font-size:15.5px;font-weight:normal;color:#596171;letter-spacing:-0.55px;-webkit-text-stroke:0.45px #596171;">Email</div>
<div class="a chip" style="left:436.2px;width:73.6px"></div>
<svg style="left:444.7px;top:444.5px" width="15" height="15" viewBox="0 0 15 15"><circle cx="7.5" cy="7.5" r="6.5" fill="none" stroke="#687385" stroke-width="1.4"/><path d="M7.5 4.2V10.8M4.2 7.5H10.8" stroke="#687385" stroke-width="1.4"/></svg>
<div class="a" style="left:467.59999999999997px;top:443.5px;font-size:15.5px;font-weight:normal;color:#596171;letter-spacing:-0.65px;-webkit-text-stroke:0.45px #596171;">Card</div>
<div class="a chip" style="left:517.4px;width:129.3px"></div>
<svg style="left:525.9px;top:444.5px" width="15" height="15" viewBox="0 0 15 15"><circle cx="7.5" cy="7.5" r="6.5" fill="none" stroke="#687385" stroke-width="1.4"/><path d="M7.5 4.2V10.8M4.2 7.5H10.8" stroke="#687385" stroke-width="1.4"/></svg>
<div class="a" style="left:548.8px;top:443.5px;font-size:15.5px;font-weight:normal;color:#596171;letter-spacing:-0.18px;-webkit-text-stroke:0.45px #596171;">Created date</div>
<div class="a chip" style="left:654.3px;width:73.7px"></div>
<svg style="left:662.8px;top:444.5px" width="15" height="15" viewBox="0 0 15 15"><circle cx="7.5" cy="7.5" r="6.5" fill="none" stroke="#687385" stroke-width="1.4"/><path d="M7.5 4.2V10.8M4.2 7.5H10.8" stroke="#687385" stroke-width="1.4"/></svg>
<div class="a" style="left:685.6999999999999px;top:443.5px;font-size:15.5px;font-weight:normal;color:#596171;letter-spacing:-0.4px;-webkit-text-stroke:0.45px #596171;">Type</div>
<div class="a chip" style="left:736.2px;width:119.4px"></div>
<svg style="left:744.7px;top:444.5px" width="15" height="15" viewBox="0 0 15 15"><circle cx="7.5" cy="7.5" r="6.5" fill="none" stroke="#687385" stroke-width="1.4"/><path d="M7.5 4.2V10.8M4.2 7.5H10.8" stroke="#687385" stroke-width="1.4"/></svg>
<div class="a" style="left:767.6px;top:443.5px;font-size:15.5px;font-weight:normal;color:#596171;letter-spacing:0.15px;-webkit-text-stroke:0.45px #596171;">More filters</div>
<div class="a btn" style="left:1149.5px;top:433px;width:85.8px"></div>
<div class="a" style="left:1185px;top:443.2px;font-size:17.5px;font-weight:normal;color:#353a44;letter-spacing:-0.21px;-webkit-text-stroke:0.51px #353a44;">Copy</div>
<div class="a btn" style="left:1244.5px;top:433px;width:96.2px"></div>
<div class="a" style="left:1278.5px;top:443.2px;font-size:17.5px;font-weight:normal;color:#353a44;letter-spacing:0.15px;-webkit-text-stroke:0.51px #353a44;">Export</div>
<div class="a btn" style="left:1349.3px;top:433px;width:105.1px"></div>
<div class="a" style="left:1383.3px;top:443.2px;font-size:17.5px;font-weight:normal;color:#353a44;letter-spacing:-0.18px;-webkit-text-stroke:0.51px #353a44;">Analyze</div>
<div class="a btn" style="left:1473px;top:433px;width:146.6px"></div>
<div class="a" style="left:1508px;top:443.2px;font-size:17.5px;font-weight:normal;color:#353a44;letter-spacing:0.03px;-webkit-text-stroke:0.51px #353a44;">Edit columns</div>
<div class="a" style="left:1131px;top:302px;width:1px;height:45px;background:#ebeef1"></div>
<div class="a" style="left:1152px;top:301px;width:192px;height:47px;border:1px solid #d8dce2;border-radius:5px;background:#fff"></div>
<div class="a" id="t_sel" style="left:1173.5px;top:316.8px;font-size:17.5px;font-weight:normal;color:#414552;letter-spacing:-0.44px;">Select Tag</div>
<svg style="left:1325px;top:320px" width="13" height="9" viewBox="0 0 13 9"><path d="M1.5 1.5L6.5 6.8L11.5 1.5" fill="none" stroke="#222" stroke-width="2" stroke-linecap="round" stroke-linejoin="round"/></svg>
<div class="a" style="left:1354.4px;top:301px;width:57.3px;height:47px;border:1px solid #d8dce2;border-radius:5px;background:#fff"></div>
<div class="a" style="left:1370.7px;top:316.8px;font-size:17.5px;font-weight:normal;color:#414552;letter-spacing:-0.91px;">Tag</div>
<div class="a" style="left:1430.6px;top:306px;width:189.7px;height:37.3px;border-radius:7px;background:#635bff;box-shadow:0 1px 2px rgba(40,30,120,.35)"></div>
<svg style="left:1442.5px;top:318px" width="14" height="14" viewBox="0 0 14 14"><path d="M7 0.5V13.5M0.5 7H13.5" stroke="#fff" stroke-width="1.7"/></svg>
<div class="a" id="t_add" style="left:1467.6px;top:316.7px;font-size:17.5px;font-weight:normal;color:#fff;letter-spacing:0.29px;-webkit-text-stroke:0.51px #fff;">Add customer</div>
<div class="a" style="left:1589px;top:316.5px;width:20px;height:19.5px;border-radius:4px;background:#8f89ff"></div>
<div class="a" style="left:1594.8px;top:318.3px;font-size:14.5px;font-weight:normal;color:#fff;letter-spacing:0px;-webkit-text-stroke:0.42px #fff;">n</div>
<!--HICONS-->
<svg style="left:1209px;top:234.4px" width="22" height="22" viewBox="0 0 22 22"><rect x="1.8" y="2" width="7" height="7" rx="1.6" stroke="#414552" stroke-width="1.75" fill="none" stroke-linejoin="round" stroke-linecap="round"/><rect x="1.8" y="12.8" width="7" height="7" rx="1.6" stroke="#414552" stroke-width="1.75" fill="none" stroke-linejoin="round" stroke-linecap="round"/><rect x="13" y="12.8" width="7" height="7" rx="1.6" stroke="#414552" stroke-width="1.75" fill="none" stroke-linejoin="round" stroke-linecap="round"/><path d="M16.6 0.6V9.4M12.2 5H21" stroke="#414552" stroke-width="1.75" fill="none" stroke-linejoin="round" stroke-linecap="round"/></svg>
<svg style="left:1259px;top:234px" width="22" height="22" viewBox="0 0 22 22"><path d="M10.9 1.2C16 1.2 20.2 5.4 20.2 10.6C20.2 15.8 16 20 10.9 20C9.2 20 7.6 19.6 6.2 18.8L2.4 20.4C1.9 20.6 1.4 20.1 1.6 19.6L3 15.6C2.1 14.2 1.6 12.4 1.6 10.6C1.6 5.4 5.8 1.2 10.9 1.2Z" stroke="#414552" stroke-width="1.75" fill="none" stroke-linejoin="round" stroke-linecap="round"/><path d="M8.2 8.2C8.2 6.7 9.4 5.7 10.9 5.7C12.4 5.7 13.6 6.7 13.6 8.1C13.6 10 10.9 10.2 10.9 12.3" stroke="#414552" stroke-width="1.75" fill="none" stroke-linejoin="round" stroke-linecap="round"/><circle cx="10.9" cy="15.4" r="1.15" fill="#414552"/></svg>
<svg style="left:1310px;top:234px" width="22" height="22" viewBox="0 0 22 22"><path d="M12.4 1.8C11.6 1.5 10.8 1.4 10 1.4C6.8 1.4 4.4 3.9 4.4 7.1V10.4L1.9 15.2C1.6 15.8 2 16.5 2.7 16.5H17.3C18 16.5 18.4 15.8 18.1 15.2L16.2 11.4V8.6" stroke="#414552" stroke-width="1.75" fill="none" stroke-linejoin="round" stroke-linecap="round"/><path d="M7.4 17.4C7.6 19 8.7 20 10 20C11.3 20 12.4 19 12.6 17.4" stroke="#414552" stroke-width="1.75" fill="none" stroke-linejoin="round" stroke-linecap="round"/><circle cx="17.4" cy="2.4" r="3.6" fill="#0a6ffc"/></svg>
<svg style="left:1359px;top:234px" width="22" height="22" viewBox="0 0 22 22"><path d="M9.03 3.77L9.17 1.37L12.83 1.37L12.97 3.77L14.65 4.46L16.44 2.87L19.03 5.46L17.44 7.25L18.13 8.93L20.53 9.07L20.53 12.73L18.13 12.87L17.44 14.55L19.03 16.34L16.44 18.93L14.65 17.34L12.97 18.03L12.83 20.43L9.17 20.43L9.03 18.03L7.35 17.34L5.56 18.93L2.97 16.34L4.56 14.55L3.87 12.87L1.47 12.73L1.47 9.07L3.87 8.93L4.56 7.25L2.97 5.46L5.56 2.87L7.35 4.46Z" stroke="#414552" stroke-width="1.75" fill="none" stroke-linejoin="round" stroke-linecap="round"/><circle cx="11" cy="10.9" r="3.4" stroke="#414552" stroke-width="1.75" fill="none" stroke-linejoin="round" stroke-linecap="round"/></svg>
<svg style="left:1409.9px;top:231.5px" width="25" height="25" viewBox="0 0 25 25"><circle cx="12.4" cy="12.4" r="12.4" fill="#675dff"/><path d="M12.4 6.2V18.6M6.2 12.4H18.6" stroke="#fff" stroke-width="2.2" stroke-linecap="round"/></svg>
<!--BICONS-->
<svg style="left:1160px;top:444.6px" width="15" height="16" viewBox="0 0 15 16"><path d="M5 5.6V3.2C5 2.1 5.9 1.2 7 1.2H11.8C12.9 1.2 13.8 2.1 13.8 3.2V8.6C13.8 9.7 12.9 10.6 11.8 10.6H9.6" stroke="#353a44" stroke-width="1.5" fill="none" stroke-linejoin="round" stroke-linecap="round"/><rect x="1" y="5.6" width="8.6" height="9.4" rx="2" stroke="#353a44" stroke-width="1.5" fill="none" stroke-linejoin="round" stroke-linecap="round"/><path d="M7.2 6.3H11.4M9.8 4.4L11.6 6.3L9.8 8.2" stroke="#353a44" stroke-width="1.3" fill="none" stroke-linejoin="round" stroke-linecap="round"/></svg>
<svg style="left:1254.5px;top:444px" width="16" height="15" viewBox="0 0 16 15"><path d="M1.3 10.8V13.4H14.6V10.8" stroke="#353a44" stroke-width="1.5" fill="none" stroke-linejoin="round" stroke-linecap="round"/><path d="M5.3 9.6V7.6C5.3 5.6 6.8 4.3 8.8 4.3H13.6M10.6 1.3L13.9 4.3L10.6 7.4" stroke="#353a44" stroke-width="1.5" fill="none" stroke-linejoin="round" stroke-linecap="round"/></svg>
<svg style="left:1360px;top:444px" width="15" height="15" viewBox="0 0 15 15"><path d="M1.3 1.2V11.6C1.3 12.7 2.2 13.5 3.3 13.5H13.8" stroke="#353a44" stroke-width="1.5" fill="none" stroke-linejoin="round" stroke-linecap="round"/><path d="M4.9 7.4V10.4M8.4 5V10.4M11.9 1.8V10.4" stroke="#353a44" stroke-width="1.7" fill="none" stroke-linecap="round"/></svg>
<svg style="left:1483px;top:443px" width="17" height="17" viewBox="0 0 17 17"><path d="M7.04 3.31L7.26 1.21L9.74 1.21L9.96 3.31L11.07 3.76L12.71 2.44L14.46 4.19L13.14 5.83L13.59 6.94L15.69 7.16L15.69 9.64L13.59 9.86L13.14 10.97L14.46 12.61L12.71 14.36L11.07 13.04L9.96 13.49L9.74 15.59L7.26 15.59L7.04 13.49L5.93 13.04L4.29 14.36L2.54 12.61L3.86 10.97L3.41 9.86L1.31 9.64L1.31 7.16L3.41 6.94L3.86 5.83L2.54 4.19L4.29 2.44L5.93 3.76Z" stroke="#353a44" stroke-width="1.4" fill="none" stroke-linejoin="round"/><circle cx="8.5" cy="8.4" r="2.5" stroke="#353a44" stroke-width="1.4" fill="none"/></svg>
<!--/BICONS--><!--/HICONS-->
<div class="a" style="left:1465px;top:221.5px;width:154px;height:44.5px;border-radius:23px;background:#f5f6f8"></div>
<div class="a" id="t_setup" style="left:1480.4px;top:235.4px;font-size:17.5px;font-weight:normal;color:#414552;letter-spacing:-0.01px;">Setup guide</div>
<svg style="left:1584px;top:230.5px" width="26" height="26" viewBox="0 0 26 26"><circle cx="13" cy="13" r="10.8" fill="none" stroke="#d8dee4" stroke-width="3"/><path d="M13 2.2A10.8 10.8 0 1 1 6.2 21.4" fill="none" stroke="#635bff" stroke-width="3"/></svg>
<div class="a" style="left:350px;top:945px;width:1266px;height:1px;background:#e3e6ea"></div>
<div class="a" id="t_60" style="left:350px;top:962.7px;font-size:17.5px;font-weight:normal;color:#353a44;letter-spacing:0.02px;-webkit-text-stroke:0.51px #353a44;">60</div>
<div class="a" id="t_res" style="left:374.5px;top:962.7px;font-size:17.5px;font-weight:normal;color:#353a44;letter-spacing:-0.22px;">results</div>
<div class="a" style="left:1478.3px;top:955px;width:79.2px;height:31.5px;border:1px solid #e6e9ed;border-radius:7px;background:#fff"></div>
<div class="a" style="left:1489.4px;top:963px;font-size:15px;font-weight:normal;color:#a3acba;letter-spacing:-0.21px;-webkit-text-stroke:0.43px #a3acba;">Previous</div>
<div class="a" style="left:1566px;top:955px;width:53.6px;height:31.5px;border:1px solid #d5dbe1;border-radius:7px;background:#fff;box-shadow:0 1px 1px rgba(0,0,0,.12)"></div>
<div class="a" style="left:1577.4px;top:963px;font-size:15px;font-weight:normal;color:#353a44;letter-spacing:0.04px;-webkit-text-stroke:0.43px #353a44;">Next</div>
<div class="a" style="left:1626.5px;top:947.3px;width:36px;height:37px;border-radius:5px;background:#f5f6f8;box-shadow:0 1px 3px rgba(0,0,0,.18)"></div>
<svg style="left:1634px;top:956px" width="20" height="17" viewBox="0 0 20 17"><rect x="1" y="1" width="18" height="15" rx="3" fill="none" stroke="#596171" stroke-width="1.8"/><path d="M5 5.2L8.5 8.5L5 11.8M10.5 12H14.5" fill="none" stroke="#596171" stroke-width="1.8"/></svg>
<!--/MAINITEMS-->
<!--TABLE-->
<div class="a rl" style="top:484px;width:1269px"></div>
<div class="a cb" style="top:499px"></div>
<div class="a hd" style="left:395px;letter-spacing:0.5px">Name</div>
<div class="a hd" style="left:672px;letter-spacing:0.29px">Customer ID</div>
<div class="a hd" style="left:886px;letter-spacing:0.1px">Email</div>
<div class="a" id="sth" style="left:1166px;top:499.9px;font-size:16.5px;color:#353a44;letter-spacing:-0.05px">Status</div>
<div class="a hd" style="left:1418px;letter-spacing:0.09px">Created</div>
<div class="a rl" style="top:529px"></div><div class="a rl2" style="top:529px"></div>
<div class="a cb" style="top:544.5px"></div>
<div class="a name" style="top:543.9px;letter-spacing:-0.07px">Albin Berge Jr.</div>
<div class="a cid" style="top:543.9px;letter-spacing:-0.53px">cus_RmpkGsVMlckXZM</div>
<div class="a em" style="top:543.9px;letter-spacing:-0.18px">emanuel22@example.org</div>
<div class="a tg" style="left:1176.0px;top:540.3px;width:25px">SF</div>
<div class="a dg" style="left:1207.5px;top:554.0px"></div>
<div class="a tg" style="left:1231.7px;top:540.3px;width:29px">ZD</div>
<div class="a dg" style="left:1267.2px;top:554.0px"></div>
<div class="a tg" style="left:1291.4px;top:540.3px;width:30px">NS</div>
<div class="a dr" style="left:1327.9px;top:549.7px"></div>
<div class="a tg" style="left:1357.4px;top:540.3px;width:26px">SS</div>
<div class="a dg" style="left:1389.9px;top:554.0px"></div>
<div class="a dt" style="top:543.9px;letter-spacing:-0.48px">Feb 16, 10:13 PM</div>
<svg style="left:1589px;top:553.5px" width="16" height="4"><circle cx="2" cy="2" r="1.6" fill="#596171"/><circle cx="8" cy="2" r="1.6" fill="#596171"/><circle cx="14" cy="2" r="1.6" fill="#596171"/></svg>
<div class="a rl" style="top:579px"></div><div class="a rl2" style="top:579px"></div>
<div class="a cb" style="top:594.5px"></div>
<div class="a name" style="top:593.9px;letter-spacing:-0.01px">Adeline Kozey</div>
<div class="a cid" style="top:593.9px;letter-spacing:-0.48px">cus_RmpkIuRwHymc7p</div>
<div class="a em" style="top:593.9px;letter-spacing:-0.15px">zokon@example.org</div>
<div class="a tg" style="left:1176.0px;top:590.3px;width:25px">SF</div>
<div class="a dr" style="left:1207.5px;top:599.7px"></div>
<div class="a tg" style="left:1237.0px;top:590.3px;width:29px">ZD</div>
<div class="a dg" style="left:1272.5px;top:604.0px"></div>
<div class="a tg" style="left:1296.7px;top:590.3px;width:30px">NS</div>
<div class="a dr" style="left:1333.2px;top:599.7px"></div>
<div class="a tg" style="left:1362.7px;top:590.3px;width:26px">SS</div>
<div class="a dr" style="left:1395.2px;top:599.7px"></div>
<div class="a dt" style="top:593.9px;letter-spacing:-0.48px">Feb 16, 10:13 PM</div>
<svg style="left:1589px;top:603.5px" width="16" height="4"><circle cx="2" cy="2" r="1.6" fill="#596171"/><circle cx="8" cy="2" r="1.6" fill="#596171"/><circle cx="14" cy="2" r="1.6" fill="#596171"/></svg>
<div class="a rl" style="top:629px"></div><div class="a rl2" style="top:629px"></div>
<div class="a cb" style="top:644.5px"></div>
<div class="a name" style="top:643.9px;letter-spacing:0.03px">Alexandria Gibson IV</div>
<div class="a cid" style="top:643.9px;letter-spacing:-0.61px">cus_RmpkHtfuLT2veS</div>
<div class="a em" style="top:643.9px;letter-spacing:-0.16px">mlangosh@example.com</div>
<div class="a tg" style="left:1176.0px;top:640.3px;width:25px">SF</div>
<div class="a dg" style="left:1207.5px;top:654.0px"></div>
<div class="a tg" style="left:1231.7px;top:640.3px;width:29px">ZD</div>
<div class="a dg" style="left:1267.2px;top:654.0px"></div>
<div class="a tg" style="left:1291.4px;top:640.3px;width:30px">NS</div>
<div class="a dr" style="left:1327.9px;top:649.7px"></div>
<div class="a tg" style="left:1357.4px;top:640.3px;width:26px">SS</div>
<div class="a dr" style="left:1389.9px;top:649.7px"></div>
<div class="a dt" style="top:643.9px;letter-spacing:-0.48px">Feb 16, 10:13 PM</div>
<svg style="left:1589px;top:653.5px" width="16" height="4"><circle cx="2" cy="2" r="1.6" fill="#596171"/><circle cx="8" cy="2" r="1.6" fill="#596171"/><circle cx="14" cy="2" r="1.6" fill="#596171"/></svg>
<div class="a rl" style="top:679px"></div><div class="a rl2" style="top:679px"></div>
<div class="a cb" style="top:694.5px"></div>
<div class="a name" style="top:693.9px;letter-spacing:-0.2px">Ena Flatley III</div>
<div class="a cid" style="top:693.9px;letter-spacing:-0.53px">cus_RmpkDe4gFTlqxm</div>
<div class="a em" style="top:693.9px;letter-spacing:-0.17px">dejuan52@example.net</div>
<div class="a tg" style="left:1176.0px;top:690.3px;width:25px">SF</div>
<div class="a dr" style="left:1207.5px;top:699.7px"></div>
<div class="a tg" style="left:1237.0px;top:690.3px;width:29px">ZD</div>
<div class="a dg" style="left:1272.5px;top:704.0px"></div>
<div class="a tg" style="left:1296.7px;top:690.3px;width:30px">NS</div>
<div class="a dg" style="left:1333.2px;top:704.0px"></div>
<div class="a tg" style="left:1357.4px;top:690.3px;width:26px">SS</div>
<div class="a dg" style="left:1389.9px;top:704.0px"></div>
<div class="a dt" style="top:693.9px;letter-spacing:-0.48px">Feb 16, 10:13 PM</div>
<svg style="left:1589px;top:703.5px" width="16" height="4"><circle cx="2" cy="2" r="1.6" fill="#596171"/><circle cx="8" cy="2" r="1.6" fill="#596171"/><circle cx="14" cy="2" r="1.6" fill="#596171"/></svg>
<div class="a rl" style="top:729px"></div><div class="a rl2" style="top:729px"></div>
<div class="a cb" style="top:744.5px"></div>
<div class="a name" style="top:743.9px;letter-spacing:-0.16px">Dr. Lucy Becker DVM</div>
<div class="a cid" style="top:743.9px;letter-spacing:-0.57px">cus_Rmpk0zxp1EMUXM</div>
<div class="a em" style="top:743.9px;letter-spacing:-0.18px">marta.brakus@example.org</div>
<div class="a tg" style="left:1176.0px;top:740.3px;width:25px">SF</div>
<div class="a dr" style="left:1207.5px;top:749.7px"></div>
<div class="a tg" style="left:1237.0px;top:740.3px;width:29px">ZD</div>
<div class="a dg" style="left:1272.5px;top:754.0px"></div>
<div class="a tg" style="left:1296.7px;top:740.3px;width:30px">NS</div>
<div class="a dg" style="left:1333.2px;top:754.0px"></div>
<div class="a tg" style="left:1357.4px;top:740.3px;width:26px">SS</div>
<div class="a dg" style="left:1389.9px;top:754.0px"></div>
<div class="a dt" style="top:743.9px;letter-spacing:-0.48px">Feb 16, 10:12 PM</div>
<svg style="left:1589px;top:753.5px" width="16" height="4"><circle cx="2" cy="2" r="1.6" fill="#596171"/><circle cx="8" cy="2" r="1.6" fill="#596171"/><circle cx="14" cy="2" r="1.6" fill="#596171"/></svg>
<div class="a rl" style="top:779px"></div><div class="a rl2" style="top:779px"></div>
<div class="a cb" style="top:794.5px"></div>
<div class="a name" style="top:793.9px;letter-spacing:-0.1px">Karianne Roob</div>
<div class="a cid" style="top:793.9px;letter-spacing:-0.39px">cus_RmpkAhu970fn3n</div>
<div class="a em" style="top:793.9px;letter-spacing:-0.28px">wunsch.adela@example.net</div>
<div class="a tg" style="left:1176.0px;top:790.3px;width:25px">SF</div>
<div class="a dr" style="left:1207.5px;top:799.7px"></div>
<div class="a tg" style="left:1237.0px;top:790.3px;width:29px">ZD</div>
<div class="a dr" style="left:1272.5px;top:799.7px"></div>
<div class="a tg" style="left:1302.0px;top:790.3px;width:30px">NS</div>
<div class="a dg" style="left:1338.5px;top:804.0px"></div>
<div class="a tg" style="left:1362.7px;top:790.3px;width:26px">SS</div>
<div class="a dr" style="left:1395.2px;top:799.7px"></div>
<div class="a dt" style="top:793.9px;letter-spacing:-0.48px">Feb 16, 10:12 PM</div>
<svg style="left:1589px;top:803.5px" width="16" height="4"><circle cx="2" cy="2" r="1.6" fill="#596171"/><circle cx="8" cy="2" r="1.6" fill="#596171"/><circle cx="14" cy="2" r="1.6" fill="#596171"/></svg>
<div class="a rl" style="top:829px"></div><div class="a rl2" style="top:829px"></div>
<div class="a cb" style="top:844.5px"></div>
<div class="a name" style="top:843.9px;letter-spacing:-0.07px">Mrs. Sarah Connelly</div>
<div class="a cid" style="top:843.9px;letter-spacing:-0.87px">cus_RmpEeFfRUnsbcA</div>
<div class="a em" style="top:843.9px;letter-spacing:-0.05px">modesto.schmidt@example.org</div>
<div class="a tg" style="left:1176.0px;top:840.3px;width:25px">SF</div>
<div class="a dr" style="left:1207.5px;top:849.7px"></div>
<div class="a tg" style="left:1237.0px;top:840.3px;width:29px">ZD</div>
<div class="a dr" style="left:1272.5px;top:849.7px"></div>
<div class="a tg" style="left:1302.0px;top:840.3px;width:30px">NS</div>
<div class="a dg" style="left:1338.5px;top:854.0px"></div>
<div class="a tg" style="left:1362.7px;top:840.3px;width:26px">SS</div>
<div class="a dg" style="left:1395.2px;top:854.0px"></div>
<div class="a dt" style="top:843.9px;letter-spacing:-0.49px">Feb 16, 9:40 PM</div>
<svg style="left:1589px;top:853.5px" width="16" height="4"><circle cx="2" cy="2" r="1.6" fill="#596171"/><circle cx="8" cy="2" r="1.6" fill="#596171"/><circle cx="14" cy="2" r="1.6" fill="#596171"/></svg>
<div class="a rl" style="top:879px"></div><div class="a rl2" style="top:879px"></div>
<div class="a cb" style="top:894.5px"></div>
<div class="a name" style="top:893.9px;letter-spacing:-0.19px">Prof. Jerel Block</div>
<div class="a cid" style="top:893.9px;letter-spacing:-0.69px">cus_RmpEMRfUCoqLu7</div>
<div class="a em" style="top:893.9px;letter-spacing:-0.13px">damore.paul@example.net</div>
<div class="a tg" style="left:1176.0px;top:890.3px;width:25px">SF</div>
<div class="a dg" style="left:1207.5px;top:904.0px"></div>
<div class="a tg" style="left:1231.7px;top:890.3px;width:29px">ZD</div>
<div class="a dr" style="left:1267.2px;top:899.7px"></div>
<div class="a tg" style="left:1296.7px;top:890.3px;width:30px">NS</div>
<div class="a dg" style="left:1333.2px;top:904.0px"></div>
<div class="a tg" style="left:1357.4px;top:890.3px;width:26px">SS</div>
<div class="a dr" style="left:1389.9px;top:899.7px"></div>
<div class="a dt" style="top:893.9px;letter-spacing:-0.49px">Feb 16, 9:40 PM</div>
<svg style="left:1589px;top:903.5px" width="16" height="4"><circle cx="2" cy="2" r="1.6" fill="#596171"/><circle cx="8" cy="2" r="1.6" fill="#596171"/><circle cx="14" cy="2" r="1.6" fill="#596171"/></svg>
<div class="a rl" style="top:929px"></div><div class="a rl2" style="top:929px"></div>
<div class="a" style="left:1554px;top:485px;width:18px;height:460px;background:linear-gradient(90deg,rgba(60,66,87,0),rgba(60,66,87,0.045))"></div>
<div class="a" style="left:0;top:929px;width:1669px;height:16px;overflow:hidden"><div class="a tg" style="left:1176.0px;top:11.3px;width:25px"></div><div class="a tg" style="left:1231.7px;top:11.3px;width:29px"></div><div class="a tg" style="left:1291.4px;top:11.3px;width:30px"></div><div class="a tg" style="left:1352.1px;top:11.3px;width:26px"></div><div class="a cb" style="top:15.5px"></div></div>
<!--/TABLE-->
<!--ANNOT-->
<svg style="left:0;top:0" width="1689" height="996" viewBox="0 0 1689 996"><path d="M789.3 216.5H1080.7V256.8H1015L1191 301.3L934 256.8H789.3Z" fill="#fff" stroke="#fe0000" stroke-width="4.7" stroke-linejoin="miter" stroke-miterlimit="2"/><rect x="1155.5" y="494" width="258.7" height="135.5" rx="20" fill="none" stroke="#fe0000" stroke-width="5"/></svg>
<div class="a" id="an_t" style="left:806.6px;top:222.7px;font-size:26px;color:#000;letter-spacing:0.78px">Custom Tag Selector</div>
<svg style="left:141px;top:234px" width="22" height="31" viewBox="0 0 22 31"><path d="M6.2 1.2C7.6 1.2 8.4 2.2 8.4 3.4V11.2L9 11.2V9.6C9 8.6 9.8 8 10.7 8C11.6 8 12.4 8.6 12.4 9.6V11.6H13V10.6C13 9.6 13.8 9 14.6 9C15.5 9 16.2 9.6 16.2 10.6V12.6H16.8V11.8C16.8 10.9 17.5 10.4 18.3 10.4C19.2 10.4 19.8 11 19.8 12V20C19.8 25 17.2 29 12.4 29C8.6 29 6.6 27.4 4.8 24.4L1.4 18.6C0.8 17.6 1 16.6 1.8 16C2.6 15.4 3.6 15.6 4.4 16.6L4 16.2V3.4C4 2.2 4.8 1.2 6.2 1.2Z" fill="#fff" stroke="#111" stroke-width="1.3" stroke-linejoin="round"/><path d="M9 11.2V16M12.7 11.6V16M16.5 12.6V16" stroke="#111" stroke-width="1.1"/></svg>
<div class="a" style="left:1671px;top:172px;width:17px;height:434px;background:#c1c1c1"></div>
<svg style="left:1674px;top:159px" width="12" height="7"><path d="M6 0.5L11.5 6.5H0.5Z" fill="#a3a3a3"/></svg>
<svg style="left:1674px;top:981px" width="12" height="7"><path d="M0.5 0.5H11.5L6 6.5Z" fill="#505050"/></svg>
<svg style="left:0;top:0" width="1689" height="996" viewBox="0 0 1689 996"><path d="M0 0H1689V12A9 9 0 0 0 1680 0.8H9A9 9 0 0 0 0 12Z" fill="#fff"/><path d="M0.5 12A9 9 0 0 1 9 0.6H1680A9 9 0 0 1 1688.5 12" fill="none" stroke="#a6a8ac" stroke-width="1.2"/><path d="M1689 984V996H1677A12 12 0 0 0 1689 984Z" fill="#fff"/><path d="M1689 983A12 12 0 0 1 1676 996" fill="none" stroke="#9a9a9a" stroke-width="1.5"/><path d="M0 988V996H8A8 8 0 0 1 0 988Z" fill="#fff"/><path d="M0 987A9 9 0 0 0 9 996" fill="none" stroke="#b8b8b8" stroke-width="1.5"/></svg>
<!--/ANNOT-->
</body></html>
